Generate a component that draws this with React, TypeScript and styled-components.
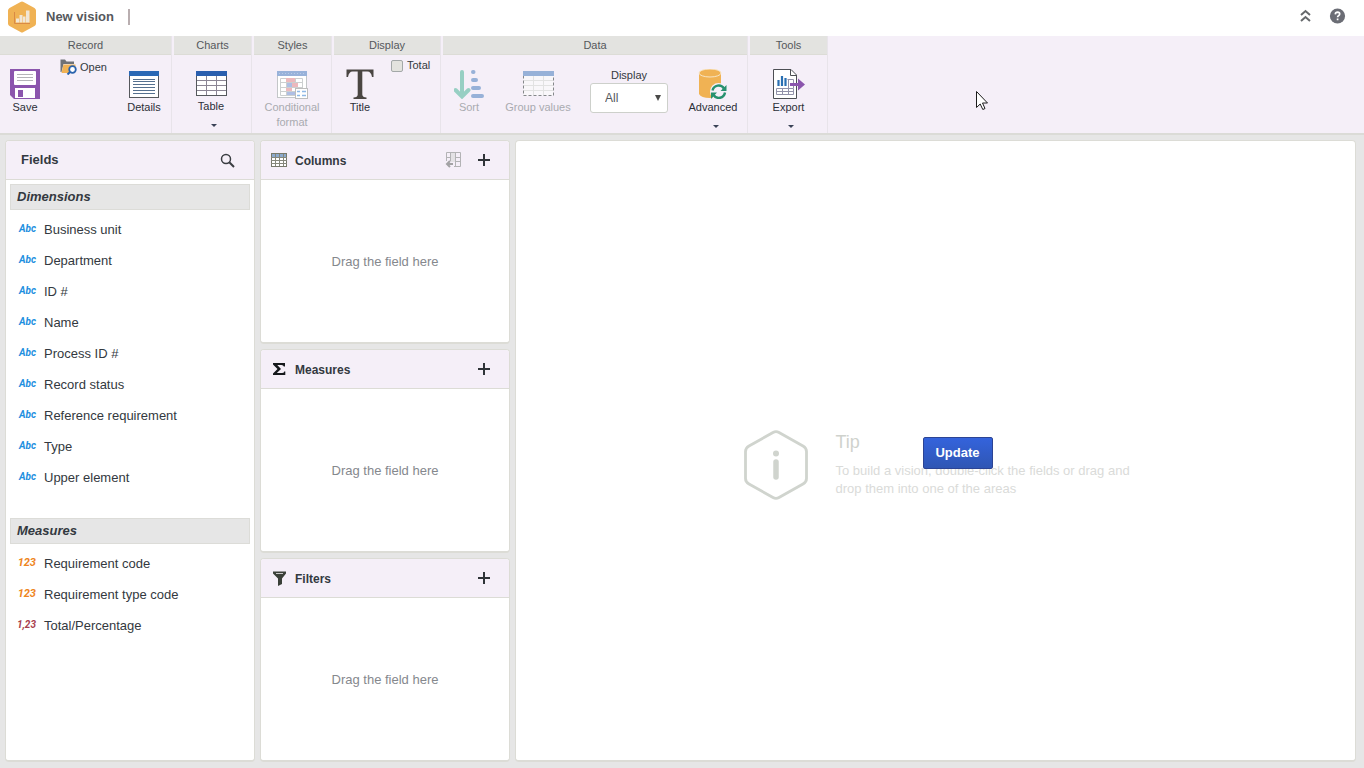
import React from "react";
import styled, { createGlobalStyle } from "styled-components";

const GlobalStyle = createGlobalStyle`
  *, *::before, *::after { box-sizing: border-box; }
  body {
    margin: 0;
    background: #e6e6e6;
    color: #333940;
    font-family: "Liberation Sans", Arial, sans-serif;
    font-size: 13px;
  }
  button, select, input { font: inherit; color: inherit; }
  h1, h2, h3, p, ul { margin: 0; padding: 0; }
  ul { list-style: none; }
`;

const Page = styled.div`
  display: flex;
  flex-direction: column;
  min-height: 100vh;
`;

/* ---------- top bar ---------- */

const TopBar = styled.header`
  display: flex;
  align-items: center;
  height: 36px;
  padding: 0 18px 2px 8px;
  background: #fff;
`;

const PageTitle = styled.h1`
  margin-left: 10px;
  padding-right: 14px;
  font-size: 13px;
  line-height: 16px;
  color: #55585c;
  border-right: 2px solid #b9aeb0;
`;

const TopActions = styled.div`
  display: flex;
  align-items: center;
  gap: 18px;
  margin-left: auto;
  padding-bottom: 2px;
`;

const IconButton = styled.button`
  display: flex;
  padding: 0;
  border: 0;
  background: none;
  cursor: pointer;
  &:disabled { cursor: default; }
`;

/* ---------- ribbon ---------- */

const Ribbon = styled.nav`
  display: flex;
  gap: 3px;
  height: 99px;
  background: #f5eff8;
  border-bottom: 2px solid #dbdbd7;
`;

const Group = styled.section<{ $width: number }>`
  display: flex;
  flex-direction: column;
  flex: none;
  width: ${(p) => p.$width}px;
  box-shadow: 1px 0 0 #e8e4ea;
`;

const GroupTitle = styled.h2`
  height: 19px;
  font-size: 11px;
  font-weight: 400;
  line-height: 19px;
  text-align: center;
  color: #55585c;
  background: #e3e3e0;
  border-bottom: 1px solid #dcdcd6;
`;

const GroupBody = styled.div<{ $gap?: number }>`
  display: flex;
  flex: 1;
  align-items: flex-start;
  gap: ${(p) => p.$gap ?? 0}px;
`;

const ToolButton = styled.button<{ $width: number }>`
  display: flex;
  flex-direction: column;
  align-items: center;
  flex: none;
  gap: 1px;
  width: ${(p) => p.$width}px;
  padding: 14px 0 0;
  border: 0;
  background: none;
  font-size: 11px;
  line-height: 15px;
  color: #2c2f38;
  cursor: pointer;
  &:disabled { color: #a9abb0; cursor: default; }
  > svg { flex: none; }
`;

const Caret = styled.span`
  margin: 9px 0 0 5px;
  border: 3px solid transparent;
  border-top-color: #3a4256;
  border-bottom: 0;
`;

const OpenButton = styled.button`
  display: flex;
  align-items: center;
  gap: 3px;
  width: 48px;
  padding: 4px 0 0;
  border: 0;
  background: none;
  font-size: 11px;
  line-height: 15px;
  cursor: pointer;
  svg { flex: none; }
`;

const CheckLabel = styled.label`
  display: flex;
  align-items: center;
  gap: 4px;
  padding: 3px 0 0 5px;
  font-size: 11px;
  line-height: 15px;
`;

const Checkbox = styled.input`
  appearance: none;
  width: 12px;
  height: 12px;
  margin: 0;
  border: 1px solid #a3a8a8;
  border-radius: 2px;
  background: #e3e3de;
`;

const SelectField = styled.label`
  display: flex;
  flex-direction: column;
  align-items: center;
  width: 78px;
  margin: 13px 9px 0;
  font-size: 11px;
  line-height: 15px;
`;

const Select = styled.select`
  width: 100%;
  height: 30px;
  padding: 0 14px;
  appearance: none;
  border: 1px solid #cdd0cb;
  border-radius: 3px;
  background: #fff;
  font-size: 12px;
  color: #55585c;
`;

const SelectBox = styled.span`
  position: relative;
  width: 100%;
  &::after {
    content: "";
    position: absolute;
    right: 7px;
    top: 12px;
    border: 3px solid transparent;
    border-top: 6px solid #4a4a48;
    border-bottom: 0;
    pointer-events: none;
  }
`;

/* ---------- workspace ---------- */

const Workspace = styled.main`
  display: flex;
  flex: 1;
  gap: 5px;
  padding: 5px 8px 6px 5px;
`;

const Panel = styled.section`
  display: flex;
  flex-direction: column;
  background: #fff;
  border: 1px solid #dcdcd6;
  border-bottom-width: 2px;
  border-radius: 4px;
  overflow: hidden;
`;

const FieldsPanel = styled(Panel)`
  flex: none;
  width: 250px;
`;

const AreaColumn = styled.div`
  display: flex;
  flex-direction: column;
  flex: none;
  gap: 5px;
  width: 250px;
`;

const AreaPanel = styled(Panel)`
  flex: 1;
`;

const PanelHeader = styled.header`
  display: flex;
  align-items: center;
  flex: none;
  height: 39px;
  padding: 0 19px 0 10px;
  background: #f5eff8;
  border-bottom: 1px solid #dcdcd6;
`;

const PanelTitle = styled.h2<{ $large?: boolean }>`
  margin-left: ${(p) => (p.$large ? 5 : 8)}px;
  padding-top: ${(p) => (p.$large ? 0 : 2)}px;
  font-size: ${(p) => (p.$large ? 13 : 12)}px;
  line-height: 16px;
`;

const PanelActions = styled.div`
  display: flex;
  align-items: center;
  gap: 16px;
  margin-left: auto;
`;

const DropArea = styled.p`
  display: flex;
  flex: 1;
  align-items: center;
  justify-content: center;
  color: #85888d;
`;

const FieldSection = styled.div`
  padding: 4px 4px 21px;
`;

const SectionTitle = styled.h3`
  height: 26px;
  margin-bottom: 4px;
  padding-left: 6px;
  font-size: 13px;
  font-style: italic;
  line-height: 23px;
  background: #e6e6e6;
  border: 1px solid #dcdcd8;
`;

const FieldRow = styled.li`
  display: flex;
  align-items: center;
  gap: 8px;
  height: 31px;
  padding-left: 6px;
  cursor: grab;
`;

const TypeTag = styled.span<{ $color: string; $large?: boolean }>`
  width: 20px;
  padding-bottom: 2px;
  font-family: Roboto, "Liberation Sans", sans-serif;
  font-size: ${(p) => (p.$large ? 11 : 10)}px;
  font-style: italic;
  font-weight: 700;
  text-align: right;
  line-height: 14px;
  color: ${(p) => p.$color};
`;

const Canvas = styled(Panel)`
  flex: 1;
  align-items: center;
  justify-content: center;
  min-width: 0;
  padding: 29px 0 0 4px;
`;

const Tip = styled.div`
  position: relative;
  display: flex;
  align-items: center;
  gap: 28px;
  color: #dadbd9;
`;

const TipText = styled.div`
  width: 296px;
  p { line-height: 18px; }
`;

const TipTitle = styled.h2`
  margin-bottom: 11px;
  font-size: 18px;
  font-weight: 400;
  line-height: 18px;
  color: #cfd2cd;
`;

const UpdateButton = styled.button`
  position: absolute;
  left: 179px;
  top: 7px;
  width: 70px;
  height: 32px;
  padding: 0 0 2px;
  border: 1px solid #2c4494;
  border-radius: 2px;
  background: linear-gradient(#3463dc, #2f56b4);
  font-weight: 700;
  color: #fff;
  cursor: pointer;
`;

const Pointer = styled.svg`
  position: absolute;
  left: 976px;
  top: 91px;
  pointer-events: none;
`;

/* ---------- drawings ---------- */

const Logo = () => (
  <svg width="28" height="32" viewBox="0 0 28 32" aria-hidden="true">
    <path d="M12.5 1 Q14 0 15.5 1 L26.5 7 Q28 8 28 9.500 V22.500 Q28 24 26.500 25 L15.500 31 Q14 32 12.500 31 L1.500 25 Q0 24 0 22.500 V9.500 Q0 8 1.500 7 Z" fill="#f0b254" />
    <path d="M6.500 11 V22.500 H22" fill="none" stroke="#d98a45" />
    <path d="M8 17.500h3v4H8zM11.500 14h3v7.500h-3zM15 15.500h2.500v6H15zM18 9.500h3.500v12H18z" fill="#f1e6d6" />
  </svg>
);

const SaveIcon = () => (
  <svg width="30" height="30" viewBox="0 0 30 30" aria-hidden="true">
    <path d="M0 0H30V30H4L0 26Z" fill="#8b55ad" />
    <rect x="4" y="2" width="22" height="14" rx="1" fill="#fff" />
    <path d="M7 5.500H23M7 8.500H23M7 11.500H23" stroke="#b4b4b8" />
    <rect x="5" y="19" width="20" height="10" fill="#fff" />
    <rect x="8" y="21" width="5" height="7" fill="#8b55ad" />
  </svg>
);

const OpenIcon = () => (
  <svg width="17" height="16" viewBox="0 0 17 16" aria-hidden="true">
    <path d="M0.500 13V0.500H5L6.500 2.500H14V5H3.500L1.500 13Z" fill="#6f7276" />
    <path d="M3.500 5.500H15.500V8L9 14H1.500Z" fill="#f0b254" />
    <circle cx="12.500" cy="10.500" r="3.300" fill="#fff" stroke="#2a63ad" strokeWidth="1.800" />
    <path d="M10 13L7.500 15.500" stroke="#2a63ad" strokeWidth="2" />
  </svg>
);

const DetailsIcon = () => (
  <svg width="30" height="30" viewBox="0 0 30 30" aria-hidden="true">
    <rect x="0.500" y="2.500" width="29" height="26" fill="#fff" stroke="#55585c" />
    <rect x="0" y="2" width="30" height="5" fill="#2a68b5" />
    <path d="M4 10.500H26M4 12.500H26M4 15.500H26M4 18.500H26M4 21.500H26M4 24.500H26" stroke="#55708f" />
  </svg>
);

const TableIcon = () => (
  <svg width="31" height="29" viewBox="0 0 31 29" aria-hidden="true">
    <rect x="0.500" y="2.500" width="30" height="24" fill="#fff" stroke="#55585c" />
    <rect x="0" y="2" width="31" height="5" fill="#2a5fae" />
    <path d="M1 11.500H30M1 16.500H30M1 21.500H30M10.500 7V26M20.500 7V26" stroke="#8b8594" />
  </svg>
);

const ConditionalIcon = () => (
  <svg width="32" height="30" viewBox="0 0 32 30" aria-hidden="true">
    <rect x="1.500" y="2.500" width="29" height="26" fill="#fff" stroke="#c3c6c8" />
    <rect x="1" y="2" width="30" height="5" fill="#98b2da" />
    <path d="M3 4.500H29" stroke="#b9cbe6" strokeDasharray="1 2" />
    <path d="M4.500 9.500H26.500V26.500H4.500ZM4 13.500H27M4 18.500H27M4 22.500H27M10.500 9V27M19.500 9V27" fill="none" stroke="#cccfd0" />
    <path d="M10 9H19V13H10ZM16 14H22V18H16ZM10 19H16V22H10Z" fill="#ecb9bd" />
    <path d="M11 14H16V18H11ZM11 23H19V26H11Z" fill="#aebee4" />
    <rect x="19.500" y="19.500" width="12" height="10" fill="#fff" stroke="#bdbdbd" />
    <path d="M21 22.500H24M26 22.500H30M21 26.500H24M26 26.500H30" stroke="#8fb8e6" strokeWidth="1.500" />
  </svg>
);

const TitleIcon = () => (
  <svg width="28" height="30" viewBox="0 0 28 30" aria-hidden="true">
    <path d="M0.500 0.500H27.500V8H26Q25 2.500 21.500 2.500H16.300V25.500Q16.500 28.500 20.500 28.500V30H7.500V28.500Q11.700 28.500 11.700 25.500V2.500H6.500Q3 2.500 2 8H0.500Z" fill="#4a4642" />
  </svg>
);

const SortIcon = () => (
  <svg width="30" height="30" viewBox="0 0 30 30" aria-hidden="true">
    <path d="M8 3V27M1.500 21L8 27.500L14.500 21" fill="none" stroke="#97cfc3" strokeWidth="4" strokeLinecap="round" />
    <path d="M19 3H19.500M19 11H22M19 19H25M19 27H28" stroke="#97b1d8" strokeWidth="4" strokeLinecap="round" />
  </svg>
);

const GroupIcon = () => (
  <svg width="31" height="30" viewBox="0 0 31 30" aria-hidden="true">
    <rect x="0.500" y="3.500" width="30" height="23" fill="#f9f7fa" stroke="#85888a" strokeDasharray="3 2" />
    <path d="M1 11.500H30M1 16.500H30M1 21.500H30M10.500 7V26M20.500 7V26" stroke="#e2e2e2" />
    <rect x="0" y="2" width="31" height="5" fill="#97b1d8" />
  </svg>
);

const AdvancedIcon = () => (
  <svg width="30" height="30" viewBox="0 0 30 30" aria-hidden="true">
    <path d="M1 4V25Q3 29 12 29Q23 29 23 25V4Z" fill="#f0b254" />
    <ellipse cx="12" cy="4" rx="11" ry="4" fill="#f0b254" stroke="#f8e5c4" />
    <circle cx="20.500" cy="22.500" r="8.500" fill="#f5eff8" />
    <path d="M14.500 21.500A6.300 6.300 0 0 1 26 19.500M27 23.500A6.300 6.300 0 0 1 15.500 26" fill="none" stroke="#27916f" strokeWidth="2.400" />
    <path d="M28.500 16V22H22.500ZM13 30V23.500H19Z" fill="#27916f" />
  </svg>
);

const ExportIcon = () => (
  <svg width="32" height="30" viewBox="0 0 32 30" aria-hidden="true">
    <path d="M0.500 0.500H18L23.500 6V29.500H0.500Z" fill="#fff" stroke="#4d4f54" />
    <path d="M17.500 0.500V6.500H23.500" fill="none" stroke="#4d4f54" />
    <path d="M5.500 11V17M9 7V17M12.500 9V17" stroke="#2a6fb2" strokeWidth="2.200" />
    <path d="M3.500 19.500H20.500V25.500H3.500ZM3 22.500H21M9.500 19V26M15.500 10V26M14.500 10.500H20.500V19" fill="none" stroke="#9292aa" />
    <path d="M17 14H25V9.500L32 15.500L25 21.500V17H17Z" fill="#8b55ad" />
  </svg>
);

const CollapseIcon = () => (
  <svg width="11" height="14" viewBox="0 0 11 14" aria-hidden="true">
    <path d="M1 6L5.500 2L10 6M1 12L5.500 8L10 12" fill="none" stroke="#66696c" strokeWidth="2" />
  </svg>
);

const HelpIcon = () => (
  <svg width="17" height="16" viewBox="0 0 17 16" aria-hidden="true">
    <circle cx="8.500" cy="8" r="7.600" fill="#6b6d75" />
    <path d="M6.300 6.300Q6.500 4.200 8.600 4.200Q10.700 4.300 10.700 6Q10.700 7 9.500 7.700Q8.600 8.200 8.600 9.300M8.600 10.500V12.200" fill="none" stroke="#fff" strokeWidth="1.700" />
  </svg>
);

const SearchIcon = () => (
  <svg width="15" height="15" viewBox="0 0 15 15" aria-hidden="true">
    <circle cx="6" cy="6" r="4.500" fill="none" stroke="#3a3d42" strokeWidth="1.500" />
    <path d="M9.300 9.300L14 14" stroke="#3a3d42" strokeWidth="2" />
  </svg>
);

const PlusIcon = () => (
  <svg width="12" height="12" viewBox="0 0 12 12" aria-hidden="true">
    <path d="M6 0V12M0 6H12" stroke="#2f3438" strokeWidth="2" />
  </svg>
);

const ColumnsIcon = () => (
  <svg width="16" height="14" viewBox="0 0 16 14" aria-hidden="true">
    <rect x="0.500" y="0.500" width="15" height="13" fill="#fff" stroke="#77796b" />
    <rect x="1" y="1" width="14" height="3" fill="#8ba9cc" />
    <path d="M0 4.500H16M0 7.500H16M0 10.500H16M4.500 1V13M8.500 1V13M12.500 1V13" stroke="#85877b" />
  </svg>
);

const SigmaIcon = () => (
  <svg width="16" height="14" viewBox="0 0 16 14" aria-hidden="true">
    <path d="M2 1H14V4.500H12.800Q12.500 3 10.500 3H6.300L10 7L5.800 11H11Q13 11 13.200 9.500H14.300V13H2V11.500L6.500 7L2 2.500Z" fill="#16191c" />
  </svg>
);

const FilterIcon = () => (
  <svg width="16" height="15" viewBox="0 0 16 15" aria-hidden="true">
    <path d="M2 0.500H15V2.500L11 7.500V13L7 15V7.500L2 2.500Z" fill="#3a4038" />
    <path d="M5 2.500H12" stroke="#c9c8c8" />
  </svg>
);

const TransposeIcon = () => (
  <svg width="17" height="16" viewBox="0 0 17 16" aria-hidden="true">
    <rect x="6" y="1" width="4" height="9" fill="#e4e2e5" />
    <path d="M1.500 9V0.500H15.500V14.500H9M1 5.500H5M10 5.500H16M10 9.500H16M5.500 1V9M10.500 1V15" fill="none" stroke="#b3b3b5" />
    <path d="M8 12H2M5 9L2 12L5 15" fill="none" stroke="#a3a3a5" strokeWidth="2" />
  </svg>
);

const InfoHexagon = () => (
  <svg width="64" height="70" viewBox="0 0 64 70" aria-hidden="true">
    <path d="M29 2.500Q32 0.800 35 2.500L59 16Q62.500 18 62.500 21.500V48.500Q62.500 52 59 54L35 67.500Q32 69.200 29 67.500L5 54Q1.500 52 1.500 48.500V21.500Q1.500 18 5 16Z" fill="none" stroke="#d0d4ce" strokeWidth="2.800" />
    <circle cx="32" cy="23.500" r="3" fill="#d0d4ce" />
    <path d="M32 32V47" stroke="#d0d4ce" strokeWidth="5.500" strokeLinecap="round" />
  </svg>
);

/* ---------- data ---------- */

const dimensions = [
  "Business unit",
  "Department",
  "ID #",
  "Name",
  "Process ID #",
  "Record status",
  "Reference requirement",
  "Type",
  "Upper element",
];

const measures = [
  { name: "Requirement code", tag: "123", color: "#ee8420", large: true },
  { name: "Requirement type code", tag: "123", color: "#ee8420", large: true },
  { name: "Total/Percentage", tag: "1,23", color: "#a83c4c" },
];

const areas = [
  { name: "Columns", icon: <ColumnsIcon />, transpose: true },
  { name: "Measures", icon: <SigmaIcon /> },
  { name: "Filters", icon: <FilterIcon /> },
];

type ToolProps = {
  icon: React.ReactNode;
  label: string;
  width: number;
  disabled?: boolean;
  menu?: boolean;
};

const Tool = ({ icon, label, width, disabled, menu }: ToolProps) => (
  <ToolButton $width={width} disabled={disabled} aria-haspopup={menu ? "menu" : undefined}>
    {icon}
    <span>{label}</span>
    {menu && <Caret />}
  </ToolButton>
);

export default function App() {
  return (
    <Page>
      <GlobalStyle />
      <TopBar>
        <Logo />
        <PageTitle>New vision</PageTitle>
        <TopActions>
          <IconButton aria-label="Collapse ribbon"><CollapseIcon /></IconButton>
          <IconButton aria-label="Help"><HelpIcon /></IconButton>
        </TopActions>
      </TopBar>

      <Ribbon>
        <Group $width={171}>
          <GroupTitle>Record</GroupTitle>
          <GroupBody $gap={10}>
            <Tool icon={<SaveIcon />} label="Save" width={50} />
            <OpenButton><OpenIcon />Open</OpenButton>
            <Tool icon={<DetailsIcon />} label="Details" width={52} />
          </GroupBody>
        </Group>
        <Group $width={77}>
          <GroupTitle>Charts</GroupTitle>
          <GroupBody>
            <Tool icon={<TableIcon />} label="Table" width={74} menu />
          </GroupBody>
        </Group>
        <Group $width={77}>
          <GroupTitle>Styles</GroupTitle>
          <GroupBody>
            <Tool icon={<ConditionalIcon />} label="Conditional format" width={76} disabled />
          </GroupBody>
        </Group>
        <Group $width={106}>
          <GroupTitle>Display</GroupTitle>
          <GroupBody>
            <Tool icon={<TitleIcon />} label="Title" width={52} />
            <CheckLabel><Checkbox type="checkbox" />Total</CheckLabel>
          </GroupBody>
        </Group>
        <Group $width={304}>
          <GroupTitle>Data</GroupTitle>
          <GroupBody $gap={9}>
            <Tool icon={<SortIcon />} label="Sort" width={52} disabled />
            <Tool icon={<GroupIcon />} label="Group values" width={68} disabled />
            <SelectField>
              Display
              <SelectBox>
                <Select defaultValue="All"><option>All</option></Select>
              </SelectBox>
            </SelectField>
            <Tool icon={<AdvancedIcon />} label="Advanced" width={54} menu />
          </GroupBody>
        </Group>
        <Group $width={77}>
          <GroupTitle>Tools</GroupTitle>
          <GroupBody>
            <Tool icon={<ExportIcon />} label="Export" width={77} menu />
          </GroupBody>
        </Group>
      </Ribbon>

      <Workspace>
        <FieldsPanel>
          <PanelHeader>
            <PanelTitle $large>Fields</PanelTitle>
            <PanelActions>
              <IconButton aria-label="Search fields"><SearchIcon /></IconButton>
            </PanelActions>
          </PanelHeader>
          <FieldSection>
            <SectionTitle>Dimensions</SectionTitle>
            <ul>
              {dimensions.map((name) => (
                <FieldRow key={name}>
                  <TypeTag $color="#1e8fe0">Abc</TypeTag>
                  {name}
                </FieldRow>
              ))}
            </ul>
          </FieldSection>
          <FieldSection>
            <SectionTitle>Measures</SectionTitle>
            <ul>
              {measures.map((m) => (
                <FieldRow key={m.name}>
                  <TypeTag $color={m.color} $large={m.large}>{m.tag}</TypeTag>
                  {m.name}
                </FieldRow>
              ))}
            </ul>
          </FieldSection>
        </FieldsPanel>

        <AreaColumn>
          {areas.map((area) => (
            <AreaPanel key={area.name}>
              <PanelHeader>
                {area.icon}
                <PanelTitle>{area.name}</PanelTitle>
                <PanelActions>
                  {area.transpose && (
                    <IconButton aria-label="Transpose columns" disabled><TransposeIcon /></IconButton>
                  )}
                  <IconButton aria-label={`Add to ${area.name}`}><PlusIcon /></IconButton>
                </PanelActions>
              </PanelHeader>
              <DropArea>Drag the field here</DropArea>
            </AreaPanel>
          ))}
        </AreaColumn>

        <Canvas>
          <Tip>
            <InfoHexagon />
            <TipText>
              <TipTitle>Tip</TipTitle>
              <p>To build a vision, double-click the fields or drag and drop them into one of the areas</p>
            </TipText>
            <UpdateButton>Update</UpdateButton>
          </Tip>
        </Canvas>
      </Workspace>

      <Pointer width="12" height="19" viewBox="0 0 12 19" aria-hidden="true">
        <path d="M0.500 0.500V16.500L4.200 13L6.800 18.500L9 17.500L6.500 12H11.500Z" fill="#fff" stroke="#1c1c1c" />
      </Pointer>
    </Page>
  );
}
